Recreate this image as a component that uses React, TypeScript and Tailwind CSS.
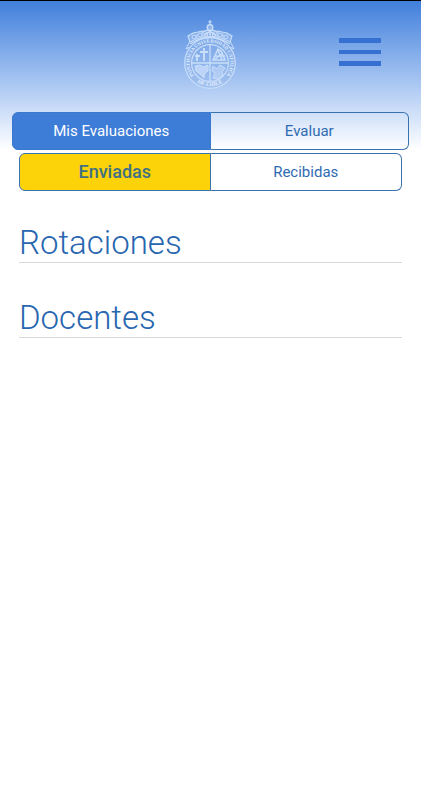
import { useState } from "react";

function Seal() {
  return (
    <svg viewBox="0 0 56 72" className="h-[72px] w-14" fill="none" stroke="#c9def9" role="img" aria-label="Pontificia Universidad Católica de Chile">
      <defs>
        <path id="ring" d="M16.2 61.8 A20.5 20.5 0 1 1 39.8 61.8" />
        <path id="ringBottom" d="M10 59.6 A23.2 23.2 0 0 0 46 59.6" />
      </defs>
      {/* crown */}
      <path d="M28 2v5M26.2 4h3.6" strokeWidth="1.2" />
      <circle cx="28" cy="9.5" r="2.8" strokeWidth="1.3" fill="#c9def9" fillOpacity=".4" />
      <path d="M20 15q3-4 8-2q5-2 8 2M23 17l5-4 5 4M28 12v5" strokeWidth="1.3" />
      <path d="M8 24l-2-6 5-3 5-1 4-1 8 2 8-2 4 1 5 1 5 3-2 6q-20-11-40 0z" strokeWidth="1.2" fill="#c9def9" fillOpacity=".3" />
      <path d="M8 26q20-13 40 0" strokeWidth="1.3" />
      <g strokeWidth="1">
        <circle cx="12" cy="19" r="2" /><circle cx="18" cy="17" r="2" />
        <circle cx="24" cy="17" r="1.6" /><circle cx="32" cy="17" r="1.6" />
        <circle cx="38" cy="17" r="2" /><circle cx="44" cy="19" r="2" />
        <path d="M15 16v5M21 15v4M28 16v3M35 15v4M41 16v5" />
      </g>
      <path d="M8 23l-2 4-2 4 4-2M48 23l2 4 2 4-4-2" strokeWidth="1" />
      {/* ring with the university's name */}
      <circle cx="28" cy="45" r="25.3" strokeWidth="1.2" fill="#8fb5eb" fillOpacity=".4" />
      <circle cx="28" cy="45" r="18.4" strokeWidth="1.2" />
      <g fill="#e4effd" stroke="none" fontFamily="'Liberation Serif', serif" fontWeight="700">
        <text textAnchor="middle" fontSize="4.8"><textPath href="#ring" startOffset="50%">PONTIFICIA UNIVERSIDAD CATOLICA</textPath></text>
        <text textAnchor="middle" fontSize="5.5"><textPath href="#ringBottom" startOffset="50%">DE CHILE</textPath></text>
      </g>
      {/* quartered shield */}
      <path d="M28 27v36M10 45h36" strokeWidth="1.3" />
      <path d="M22 30v13M18 34h8M15 36v7M13 38h5" strokeWidth="1.9" />
      <path d="M36 31l-5 11h12l-4-9zM33 38h10M36 32l4 10M41 35l-8 6M31 42h12" strokeWidth="1.5" />
      <path d="M13 48l5-1 3 2 5-2v6l-3 2-1 5-3-3-5-4z" fill="#c9def9" fillOpacity=".75" />
      <path d="M31 48l4 3 3-4 5 3-3 4 1 3-5 4-5-1 2-5-3-2z" fill="#c9def9" fillOpacity=".5" />
    </svg>
  );
}

type TabsProps = {
  label: string;
  options: string[];
  activeClass: string;
  className?: string;
};

function Tabs({ label, options, activeClass, className = "" }: TabsProps) {
  const [selected, setSelected] = useState(0);
  return (
    <div role="group" aria-label={label} className={`grid grid-cols-2 ${className}`}>
      {options.map((option, i) => (
        <button
          key={option}
          type="button"
          aria-pressed={selected === i}
          onClick={() => setSelected(i)}
          className={`h-[38px] border-y ${i === 0 ? "rounded-l-md border-x" : "rounded-r-md border-r"} ${selected === i ? activeClass : "border-[#3a72ae] text-[15px] text-[#2f6bb3]"}`}
        >
          {option}
        </button>
      ))}
    </div>
  );
}

function Section({ title }: { title: string }) {
  return (
    <section className="border-b border-[#d8d8d8] pb-px">
      <h2 className="text-[33px] leading-9 font-light text-[#2866b0]">{title}</h2>
    </section>
  );
}

export default function App() {
  return (
    <div className="min-h-screen border-t border-black bg-white font-[Roboto,sans-serif]">
      <div className="bg-linear-to-b from-[#407fdb] to-white">
        <header className="grid h-[111px] grid-cols-3 pt-[17px]">
          <div className="col-start-2 flex justify-center">
            <Seal />
          </div>
          <div className="flex justify-end pt-5 pr-10">
            <button type="button" aria-label="Menú" className="flex h-7 w-[42px] flex-col justify-between">
              <span className="h-[5px] w-full bg-[#3671d1]" />
              <span className="h-1 w-full bg-[#3671d1]" />
              <span className="h-[5px] w-full bg-[#3671d1]" />
            </button>
          </div>
        </header>
        <Tabs label="Sección" options={["Mis Evaluaciones", "Evaluar"]} activeClass="border-[#3a78cc] bg-[#3d7dd8] text-[15px] text-white" className="mx-3" />
      </div>
      <main className="px-[19px] pt-[3px]">
        <Tabs label="Evaluaciones" options={["Enviadas", "Recibidas"]} activeClass="border-[#3a72ae] bg-[#fcd208] text-lg font-medium text-[#3f7183]" />
        <div className="flex flex-col gap-[37px] pt-[34px]">
          <Section title="Rotaciones" />
          <Section title="Docentes" />
        </div>
      </main>
    </div>
  );
}
